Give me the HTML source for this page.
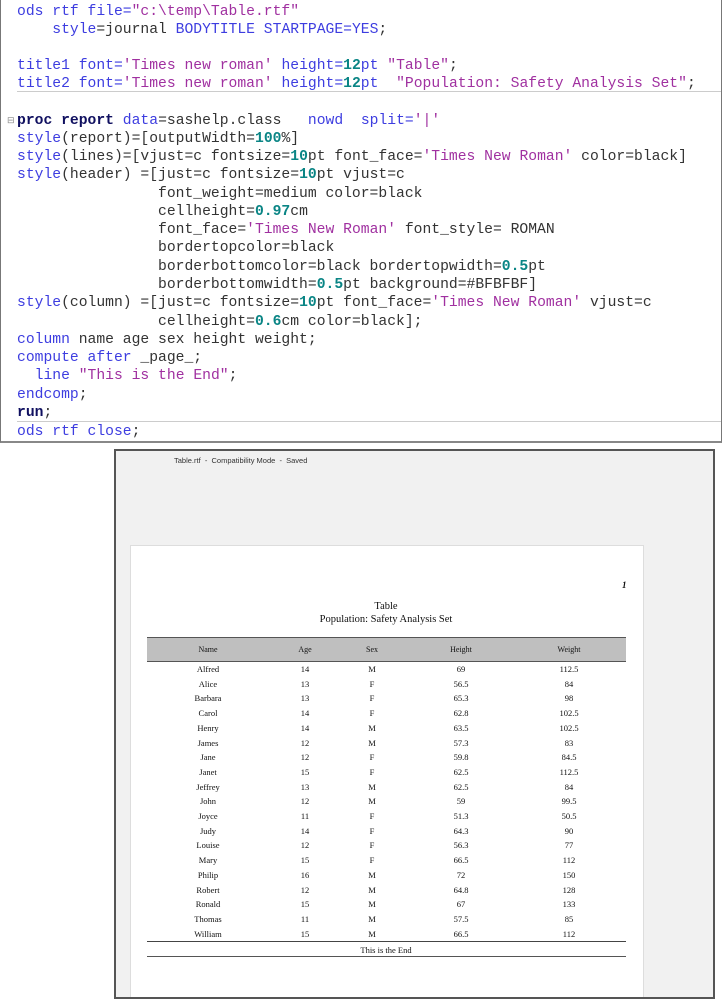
<!DOCTYPE html>
<html><head><meta charset="utf-8"><style>
*{margin:0;padding:0;box-sizing:border-box}
body{width:722px;height:999px;background:#fff;position:relative;overflow:hidden}
#code{position:absolute;left:0;top:0;width:722px;height:443px;border:1px solid #777;border-top:none;border-bottom:2px solid #888}
.l{position:absolute;left:16px;font-family:"Liberation Mono",monospace;font-size:14.7px;color:#333;white-space:pre;line-height:18px}
.k{color:#3d3de0}.s{color:#a030a0}.n{color:#0a8585;font-weight:bold}.b{color:#101060;font-weight:bold}
.sep{position:absolute;left:16px;right:0;height:1px;background:#ccc}
#win{position:absolute;left:114px;top:449px;width:601px;height:550px;background:#f1f1f1;border:2px solid #555;overflow:hidden}
#ttl{position:absolute;left:58px;top:5px;font-family:"Liberation Sans",sans-serif;font-size:7.5px;color:#333}
#page{position:absolute;left:14px;top:94px;width:514px;height:452px;background:#fff;border:1px solid #ddd;border-bottom:none}
.t{position:absolute;font-family:"Liberation Serif",serif;color:#111;white-space:nowrap}
.c{position:absolute;font-family:"Liberation Serif",serif;font-size:8.5px;color:#111;transform:translateX(-50%);white-space:nowrap}
</style></head><body>
<div id="code">
<div class="l" style="top:3px"><span class="k">ods rtf file=</span><span class="s">"c:\temp\Table.rtf"</span></div>
<div class="l" style="top:21px">    <span class="k">style</span>=journal <span class="k">BODYTITLE STARTPAGE=YES</span>;</div>
<div class="l" style="top:57px"><span class="k">title1 font=</span><span class="s">'Times new roman'</span> <span class="k">height=</span><span class="n">12</span><span class="k">pt</span> <span class="s">"Table"</span>;</div>
<div class="l" style="top:75px"><span class="k">title2 font=</span><span class="s">'Times new roman'</span> <span class="k">height=</span><span class="n">12</span><span class="k">pt</span>  <span class="s">"Population: Safety Analysis Set"</span>;</div>
<div class="sep" style="top:91px"></div>
<div class="l" style="top:112px;left:6px;font-size:9px;color:#888">⊟</div>
<div class="l" style="top:112px"><span class="b">proc report</span> <span class="k">data</span>=sashelp.class   <span class="k">nowd</span>  <span class="k">split=</span><span class="s">'|'</span></div>
<div class="l" style="top:130px"><span class="k">style</span>(report)=[outputWidth=<span class="n">100</span>%]</div>
<div class="l" style="top:148px"><span class="k">style</span>(lines)=[vjust=c fontsize=<span class="n">10</span>pt font_face=<span class="s">'Times New Roman'</span> color=black]</div>
<div class="l" style="top:166px"><span class="k">style</span>(header) =[just=c fontsize=<span class="n">10</span>pt vjust=c</div>
<div class="l" style="top:185px">                font_weight=medium color=black</div>
<div class="l" style="top:203px">                cellheight=<span class="n">0.97</span>cm</div>
<div class="l" style="top:221px">                font_face=<span class="s">'Times New Roman'</span> font_style= ROMAN</div>
<div class="l" style="top:239px">                bordertopcolor=black</div>
<div class="l" style="top:258px">                borderbottomcolor=black bordertopwidth=<span class="n">0.5</span>pt</div>
<div class="l" style="top:276px">                borderbottomwidth=<span class="n">0.5</span>pt background=#BFBFBF]</div>
<div class="l" style="top:294px"><span class="k">style</span>(column) =[just=c fontsize=<span class="n">10</span>pt font_face=<span class="s">'Times New Roman'</span> vjust=c</div>
<div class="l" style="top:313px">                cellheight=<span class="n">0.6</span>cm color=black];</div>
<div class="l" style="top:331px"><span class="k">column</span> name age sex height weight;</div>
<div class="l" style="top:349px"><span class="k">compute after</span> _page_;</div>
<div class="l" style="top:367px">  <span class="k">line</span> <span class="s">"This is the End"</span>;</div>
<div class="l" style="top:386px"><span class="k">endcomp</span>;</div>
<div class="l" style="top:404px"><span class="b">run</span>;</div>
<div class="sep" style="top:421px"></div>
<div class="l" style="top:423px"><span class="k">ods rtf close</span>;</div>
</div>
<div id="win">
<div id="ttl">Table.rtf &nbsp;-&nbsp; Compatibility Mode &nbsp;-&nbsp; Saved</div>
<div id="page"></div>
</div>
<div class="t" style="left:622px;top:580px;font-size:9px;font-weight:bold;font-style:italic">1</div>
<div class="t" style="left:0;width:772px;text-align:center;top:601px;font-size:10.5px">Table</div>
<div class="t" style="left:0;width:772px;text-align:center;top:614px;font-size:10.5px">Population: Safety Analysis Set</div>
<div style="position:absolute;left:147px;top:637px;width:479px;height:25px;background:#bfbfbf;border-top:1px solid #555;border-bottom:1px solid #555"></div>
<div id="rows"></div>
<div style="position:absolute;left:147px;top:941px;width:479px;height:1px;background:#444"></div>
<div class="c" style="left:386px;top:945px">This is the End</div>
<div style="position:absolute;left:147px;top:956px;width:479px;height:1px;background:#555"></div>
<div class="c" style="left:208px;top:645px;font-size:8px">Name</div>
<div class="c" style="left:305px;top:645px;font-size:8px">Age</div>
<div class="c" style="left:372px;top:645px;font-size:8px">Sex</div>
<div class="c" style="left:461px;top:645px;font-size:8px">Height</div>
<div class="c" style="left:569px;top:645px;font-size:8px">Weight</div>
<script>
var d=[["Alfred",14,"M",69,112.5],["Alice",13,"F",56.5,84],["Barbara",13,"F",65.3,98],["Carol",14,"F",62.8,102.5],["Henry",14,"M",63.5,102.5],["James",12,"M",57.3,83],["Jane",12,"F",59.8,84.5],["Janet",15,"F",62.5,112.5],["Jeffrey",13,"M",62.5,84],["John",12,"M",59,99.5],["Joyce",11,"F",51.3,50.5],["Judy",14,"F",64.3,90],["Louise",12,"F",56.3,77],["Mary",15,"F",66.5,112],["Philip",16,"M",72,150],["Robert",12,"M",64.8,128],["Ronald",15,"M",67,133],["Thomas",11,"M",57.5,85],["William",15,"M",66.5,112]];
var xs=[208,305,372,461,569],h="";
d.forEach(function(r,i){var y=664+i*14.7;r.forEach(function(v,j){h+='<div class="c" style="left:'+xs[j]+'px;top:'+y.toFixed(1)+'px">'+v+'</div>';});});
document.getElementById("rows").outerHTML=h;
</script>
</body></html>
